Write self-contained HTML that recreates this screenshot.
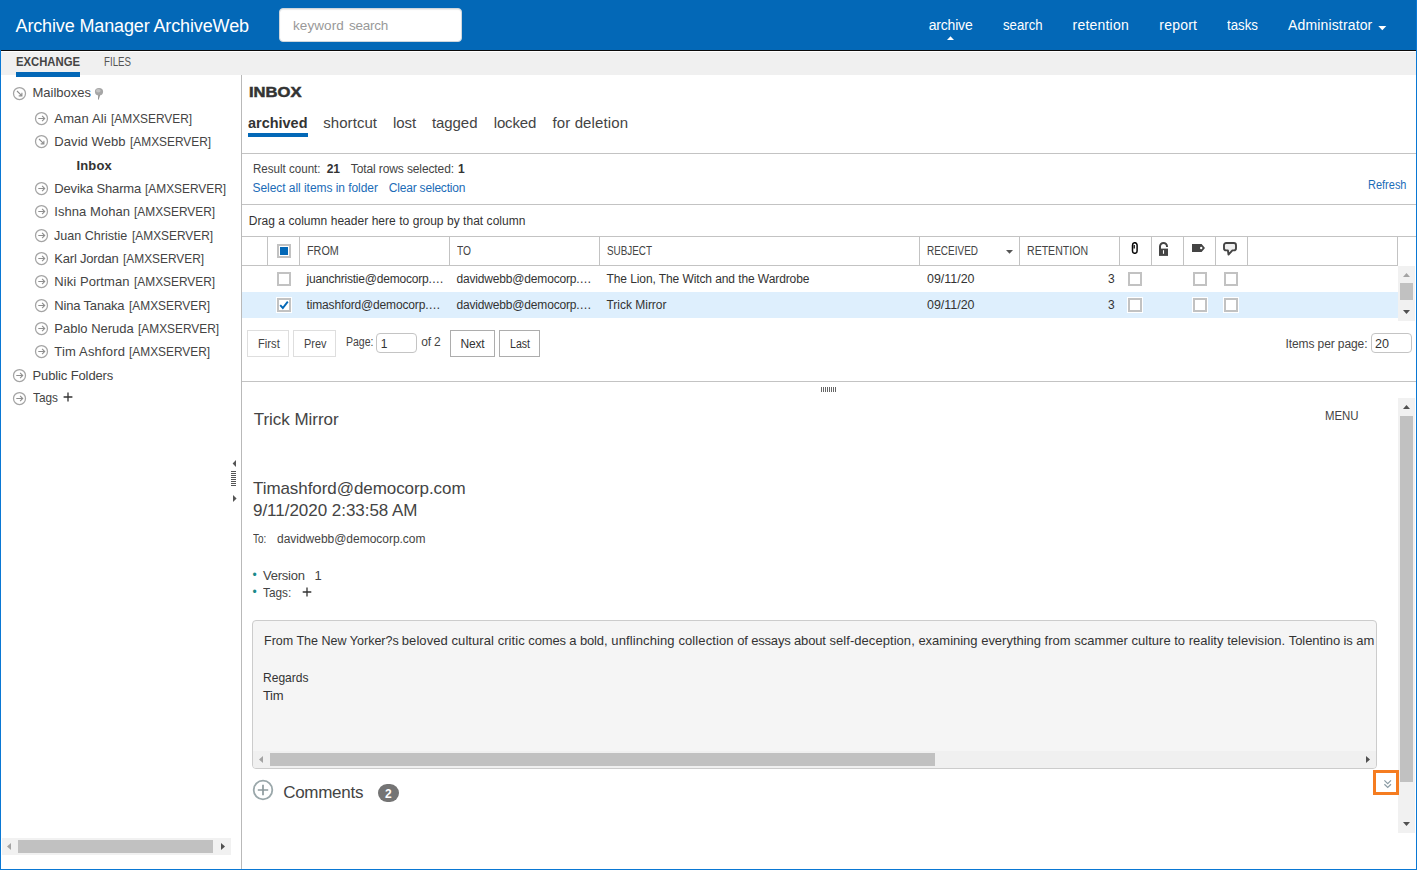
<!DOCTYPE html>
<html lang="en"><head><meta charset="utf-8"><title>Archive Manager ArchiveWeb</title>
<style>
html,body{margin:0;padding:0}
body{width:1417px;height:870px;position:relative;overflow:hidden;background:#fff;font-family:'Liberation Sans',sans-serif;color:#444}
.t{position:absolute;white-space:nowrap;line-height:24px;transform-origin:0 50%}
.abs,.ti,.cb,.ln,.vl{position:absolute}
.ln{height:1px;background:#c3c3c3}
.vl{width:1px;background:#c3c3c3}
#hdr{position:absolute;left:0;top:0;width:1417px;height:50px;background:#0368b7}
#hdrline{position:absolute;left:0;top:50px;width:1417px;height:1px;background:#0b0b0b}
#tabs{position:absolute;left:0;top:52px;width:1417px;height:23px;background:#f0f0f0}
#search{position:absolute;box-sizing:border-box;left:279px;top:8px;width:183px;height:34px;background:#fff;border:1px solid #cfd6dc;border-radius:4px;box-shadow:inset 0 1px 1px rgba(0,0,0,.08)}
.cb{width:10px;height:10px;border:2px solid #c2c2c2;background:#fff}
.cb.on{box-shadow:0 0 0 1px #fff}
.cb i{position:absolute;left:1px;top:1px;width:8px;height:8px;background:#0368b7}
.cb svg{position:absolute;left:0;top:0}
.btn{position:absolute;box-sizing:border-box;border:1px solid #adadad;background:#fff}
.btn.dis{border-color:#dedede}
.inp{position:absolute;box-sizing:border-box;border:1px solid #c4c4c4;border-radius:4px;background:#fff}
.sb{position:absolute;background:#f1f1f1}
.th{position:absolute;background:#c1c1c1}
#frame-l,#frame-r,#frame-b{position:absolute;background:#0a78d4}
</style></head><body>

<div id="hdr">
<span class="t" style="left:15.5px;top:14px;font-size:18px;color:#fff;letter-spacing:-0.13px;">Archive Manager ArchiveWeb</span>
<div id="search"></div>
<span class="t" style="left:293px;top:14px;font-size:13.5px;color:#999;letter-spacing:0.09px;">keyword</span>
<span class="t" style="left:349px;top:14px;font-size:13.5px;color:#999;letter-spacing:-0.25px;">search</span>
<span class="t" style="left:928.8px;top:13px;font-size:14px;color:#fff;letter-spacing:-0.21px;">archive</span>
<span class="t" style="left:1002.7px;top:13px;font-size:14px;color:#fff;transform:scaleX(0.942);">search</span>
<span class="t" style="left:1072.6px;top:13px;font-size:14px;color:#fff;letter-spacing:0.20px;">retention</span>
<span class="t" style="left:1159.3px;top:13px;font-size:14px;color:#fff;letter-spacing:0.22px;">report</span>
<span class="t" style="left:1227px;top:13px;font-size:14px;color:#fff;transform:scaleX(0.948);">tasks</span>
<span class="t" style="left:1288px;top:13px;font-size:14px;color:#fff;letter-spacing:0.15px;">Administrator</span>
<svg class="abs" style="left:947px;top:36px" width="7" height="4" viewBox="0 0 7 4"><path d="M0,4 L3.5,0.3 L7,4z" fill="#fff"/></svg>
<svg class="abs" style="left:1378px;top:25.5px" width="9" height="5" viewBox="0 0 9 5"><path d="M0.3,0 L8.3,0 L4.3,4.2z" fill="#fff"/></svg>
</div><div id="hdrline"></div>
<div id="tabs"></div>
<span class="t" style="left:16px;top:50px;font-size:12px;color:#444;font-weight:700;transform:scaleX(0.941);">EXCHANGE</span>
<span class="t" style="left:103.5px;top:50px;font-size:12px;color:#555;transform:scaleX(0.809);">FILES</span>
<div class="abs" style="left:16px;top:72px;width:64px;height:5px;background:#0368b7"></div>
<div id="tree">
<svg class="ti" style="left:12.0px;top:86.0px" width="15" height="15" viewBox="-7.5 -7.5 15 15"><circle r="6" fill="none" stroke="#a4a4a4" stroke-width="1.25"/><g fill="none" stroke="#8e8e8e" stroke-width="1.1"><path d="M-2.5,-2.5 L2.2,2.2 M2.4,-0.8 L2.4,2.4 L-0.8,2.4" /></g></svg>
<span class="t" style="left:32.5px;top:81px;font-size:13px;color:#444;">Mailboxes</span>
<svg class="abs" style="left:94px;top:87px" width="10" height="14" viewBox="0 0 10 14"><path d="M4.3,7.6 L6.2,7.6 L4.7,12.8 L4.1,12.6z" fill="#858585"/><ellipse cx="5" cy="4.7" rx="4.1" ry="3.7" fill="#a6a6a6"/><ellipse cx="4.3" cy="3.8" rx="2.3" ry="1.7" fill="#c4c4c4"/></svg>
<svg class="ti" style="left:34.0px;top:111.0px" width="15" height="15" viewBox="-7.5 -7.5 15 15"><circle r="6" fill="none" stroke="#a4a4a4" stroke-width="1.25"/><g fill="none" stroke="#8e8e8e" stroke-width="1.1"><path d="M-3.2,0 L3,0 M0.6,-2.6 L3.2,0 L0.6,2.6" /></g></svg>
<span class="t" style="left:54.3px;top:107px;font-size:13px;color:#444;letter-spacing:0.16px;">Aman Ali</span>
<span class="t" style="left:110.95px;top:107px;font-size:13px;color:#444;transform:scaleX(0.915);">[AMXSERVER]</span>
<svg class="ti" style="left:34.0px;top:134.0px" width="15" height="15" viewBox="-7.5 -7.5 15 15"><circle r="6" fill="none" stroke="#a4a4a4" stroke-width="1.25"/><g fill="none" stroke="#8e8e8e" stroke-width="1.1"><path d="M-2.5,-2.5 L2.2,2.2 M2.4,-0.8 L2.4,2.4 L-0.8,2.4" /></g></svg>
<span class="t" style="left:54.3px;top:130px;font-size:13px;color:#444;letter-spacing:0.07px;">David Webb</span>
<span class="t" style="left:129.7px;top:130px;font-size:13px;color:#444;transform:scaleX(0.915);">[AMXSERVER]</span>
<span class="t" style="left:76.5px;top:154px;font-size:13px;color:#333;font-weight:700;letter-spacing:0.14px;">Inbox</span>
<svg class="ti" style="left:34.0px;top:181.0px" width="15" height="15" viewBox="-7.5 -7.5 15 15"><circle r="6" fill="none" stroke="#a4a4a4" stroke-width="1.25"/><g fill="none" stroke="#8e8e8e" stroke-width="1.1"><path d="M-3.2,0 L3,0 M0.6,-2.6 L3.2,0 L0.6,2.6" /></g></svg>
<span class="t" style="left:54.3px;top:177px;font-size:13px;color:#444;letter-spacing:-0.16px;">Devika Sharma</span>
<span class="t" style="left:145.45px;top:177px;font-size:13px;color:#444;transform:scaleX(0.915);">[AMXSERVER]</span>
<svg class="ti" style="left:34.0px;top:204.0px" width="15" height="15" viewBox="-7.5 -7.5 15 15"><circle r="6" fill="none" stroke="#a4a4a4" stroke-width="1.25"/><g fill="none" stroke="#8e8e8e" stroke-width="1.1"><path d="M-3.2,0 L3,0 M0.6,-2.6 L3.2,0 L0.6,2.6" /></g></svg>
<span class="t" style="left:54.3px;top:200px;font-size:13px;color:#444;letter-spacing:0.05px;">Ishna Mohan</span>
<span class="t" style="left:134.2px;top:200px;font-size:13px;color:#444;transform:scaleX(0.915);">[AMXSERVER]</span>
<svg class="ti" style="left:34.0px;top:228.0px" width="15" height="15" viewBox="-7.5 -7.5 15 15"><circle r="6" fill="none" stroke="#a4a4a4" stroke-width="1.25"/><g fill="none" stroke="#8e8e8e" stroke-width="1.1"><path d="M-3.2,0 L3,0 M0.6,-2.6 L3.2,0 L0.6,2.6" /></g></svg>
<span class="t" style="left:54.3px;top:224px;font-size:13px;color:#444;transform:scaleX(0.965);">Juan Christie</span>
<span class="t" style="left:131.7px;top:224px;font-size:13px;color:#444;transform:scaleX(0.915);">[AMXSERVER]</span>
<svg class="ti" style="left:34.0px;top:251.0px" width="15" height="15" viewBox="-7.5 -7.5 15 15"><circle r="6" fill="none" stroke="#a4a4a4" stroke-width="1.25"/><g fill="none" stroke="#8e8e8e" stroke-width="1.1"><path d="M-3.2,0 L3,0 M0.6,-2.6 L3.2,0 L0.6,2.6" /></g></svg>
<span class="t" style="left:54.3px;top:247px;font-size:13px;color:#444;letter-spacing:-0.20px;">Karl Jordan</span>
<span class="t" style="left:122.95px;top:247px;font-size:13px;color:#444;transform:scaleX(0.915);">[AMXSERVER]</span>
<svg class="ti" style="left:34.0px;top:274.25px" width="15" height="15" viewBox="-7.5 -7.5 15 15"><circle r="6" fill="none" stroke="#a4a4a4" stroke-width="1.25"/><g fill="none" stroke="#8e8e8e" stroke-width="1.1"><path d="M-3.2,0 L3,0 M0.6,-2.6 L3.2,0 L0.6,2.6" /></g></svg>
<span class="t" style="left:54.3px;top:270px;font-size:13px;color:#444;letter-spacing:0.07px;">Niki Portman</span>
<span class="t" style="left:133.7px;top:270px;font-size:13px;color:#444;transform:scaleX(0.915);">[AMXSERVER]</span>
<svg class="ti" style="left:34.0px;top:298.0px" width="15" height="15" viewBox="-7.5 -7.5 15 15"><circle r="6" fill="none" stroke="#a4a4a4" stroke-width="1.25"/><g fill="none" stroke="#8e8e8e" stroke-width="1.1"><path d="M-3.2,0 L3,0 M0.6,-2.6 L3.2,0 L0.6,2.6" /></g></svg>
<span class="t" style="left:54.3px;top:294px;font-size:13px;color:#444;letter-spacing:-0.18px;">Nina Tanaka</span>
<span class="t" style="left:128.7px;top:294px;font-size:13px;color:#444;transform:scaleX(0.915);">[AMXSERVER]</span>
<svg class="ti" style="left:34.0px;top:321.0px" width="15" height="15" viewBox="-7.5 -7.5 15 15"><circle r="6" fill="none" stroke="#a4a4a4" stroke-width="1.25"/><g fill="none" stroke="#8e8e8e" stroke-width="1.1"><path d="M-3.2,0 L3,0 M0.6,-2.6 L3.2,0 L0.6,2.6" /></g></svg>
<span class="t" style="left:54.3px;top:317px;font-size:13px;color:#444;letter-spacing:-0.00px;">Pablo Neruda</span>
<span class="t" style="left:137.95px;top:317px;font-size:13px;color:#444;transform:scaleX(0.915);">[AMXSERVER]</span>
<svg class="ti" style="left:34.0px;top:344.25px" width="15" height="15" viewBox="-7.5 -7.5 15 15"><circle r="6" fill="none" stroke="#a4a4a4" stroke-width="1.25"/><g fill="none" stroke="#8e8e8e" stroke-width="1.1"><path d="M-3.2,0 L3,0 M0.6,-2.6 L3.2,0 L0.6,2.6" /></g></svg>
<span class="t" style="left:54.3px;top:340px;font-size:13px;color:#444;letter-spacing:0.18px;">Tim Ashford</span>
<span class="t" style="left:129.2px;top:340px;font-size:13px;color:#444;transform:scaleX(0.915);">[AMXSERVER]</span>
<svg class="ti" style="left:12.0px;top:368.0px" width="15" height="15" viewBox="-7.5 -7.5 15 15"><circle r="6" fill="none" stroke="#a4a4a4" stroke-width="1.25"/><g fill="none" stroke="#8e8e8e" stroke-width="1.1"><path d="M-3.2,0 L3,0 M0.6,-2.6 L3.2,0 L0.6,2.6" /></g></svg>
<span class="t" style="left:32.5px;top:364px;font-size:13px;color:#444;letter-spacing:-0.12px;">Public Folders</span>
<svg class="ti" style="left:12.0px;top:391.0px" width="15" height="15" viewBox="-7.5 -7.5 15 15"><circle r="6" fill="none" stroke="#a4a4a4" stroke-width="1.25"/><g fill="none" stroke="#8e8e8e" stroke-width="1.1"><path d="M-3.2,0 L3,0 M0.6,-2.6 L3.2,0 L0.6,2.6" /></g></svg>
<span class="t" style="left:32.5px;top:386px;font-size:13px;color:#444;transform:scaleX(0.910);">Tags</span>
<svg class="abs" style="left:63px;top:392px" width="10" height="10" viewBox="0 0 10 10"><path d="M5,0.5 V9.5 M0.6,5 H9.4" stroke="#333" stroke-width="1.3"/></svg>
<div class="sb" style="left:2px;top:838px;width:229px;height:17px"></div><div class="th" style="left:18px;top:840px;width:195px;height:13px"></div>
<svg class="abs" style="left:7px;top:843px" width="4" height="7" viewBox="0 0 4 7"><path d="M4,0 L0,3.5 L4,7z" fill="#a3a3a3"/></svg>
<svg class="abs" style="left:221px;top:843px" width="4" height="7" viewBox="0 0 4 7"><path d="M0,0 L4,3.5 L0,7z" fill="#505050"/></svg>
</div>
<div class="vl" style="left:241px;top:75px;height:794px;background:#b9b9b9"></div>
<svg class="abs" style="left:231px;top:460px" width="7" height="42" viewBox="0 0 7 42"><path d="M5,0 L1.6,3.5 L5,7z M2,35 L5.6,38.5 L2,42z" fill="#555"/><path d="M0,11.5h5M0,13.5h5M0,15.5h5M0,17.5h5M0,19.5h5M0,21.5h5M0,23.5h5M0,25.5h5" stroke="#555" stroke-width="1"/></svg>
<div id="main">
<span class="t" style="left:248.5px;top:80px;font-size:15px;color:#333;font-weight:700;transform:scaleX(1.105);-webkit-text-stroke:0.5px #333;">INBOX</span>
<span class="t" style="left:248px;top:111px;font-size:15px;color:#333;font-weight:700;transform:scaleX(0.964);">archived</span>
<span class="t" style="left:323.25px;top:111px;font-size:15px;color:#444;letter-spacing:0.06px;">shortcut</span>
<span class="t" style="left:393px;top:111px;font-size:15px;color:#444;letter-spacing:-0.03px;">lost</span>
<span class="t" style="left:432px;top:111px;font-size:15px;color:#444;letter-spacing:-0.08px;">tagged</span>
<span class="t" style="left:493.75px;top:111px;font-size:15px;color:#444;letter-spacing:-0.17px;">locked</span>
<span class="t" style="left:552.5px;top:111px;font-size:15px;color:#444;letter-spacing:0.12px;">for deletion</span>
<div class="abs" style="left:248px;top:133px;width:60px;height:4px;background:#0368b7"></div>
<div class="ln" style="left:242px;top:153px;width:1174px"></div>
<span class="t" style="left:252.5px;top:157px;font-size:12px;color:#444;transform:scaleX(0.964);">Result count:</span>
<span class="t" style="left:326.75px;top:157px;font-size:12px;color:#333;font-weight:700;letter-spacing:-0.11px;">21</span>
<span class="t" style="left:350.75px;top:157px;font-size:12px;color:#444;letter-spacing:-0.11px;">Total rows selected:</span>
<span class="t" style="left:458px;top:157px;font-size:12px;color:#333;font-weight:700;">1</span>
<span class="t" style="left:252.5px;top:176px;font-size:12px;color:#1b6cb7;letter-spacing:-0.05px;">Select all items in folder</span>
<span class="t" style="left:388.75px;top:176px;font-size:12px;color:#1b6cb7;letter-spacing:-0.19px;">Clear selection</span>
<span class="t" style="left:1367.5px;top:173px;font-size:12px;color:#1b6cb7;transform:scaleX(0.916);">Refresh</span>
<div class="ln" style="left:242px;top:204px;width:1174px"></div>
<span class="t" style="left:248.75px;top:209px;font-size:12px;color:#333;letter-spacing:0.04px;">Drag a column header here to group by that column</span>
<div class="ln" style="left:242px;top:236px;width:1174px"></div>
<div class="ln" style="left:242px;top:265px;width:1156px"></div>
<div class="vl" style="left:267px;top:237px;height:28px"></div>
<div class="vl" style="left:299px;top:237px;height:28px"></div>
<div class="vl" style="left:449px;top:237px;height:28px"></div>
<div class="vl" style="left:599px;top:237px;height:28px"></div>
<div class="vl" style="left:919px;top:237px;height:28px"></div>
<div class="vl" style="left:1019px;top:237px;height:28px"></div>
<div class="vl" style="left:1119px;top:237px;height:28px"></div>
<div class="vl" style="left:1151px;top:237px;height:28px"></div>
<div class="vl" style="left:1183px;top:237px;height:28px"></div>
<div class="vl" style="left:1215px;top:237px;height:28px"></div>
<div class="vl" style="left:1247px;top:237px;height:28px"></div>
<div class="vl" style="left:1397px;top:237px;height:28px"></div>
<span class="cb" style="left:277px;top:244px"><i></i></span>
<span class="t" style="left:306.5px;top:239px;font-size:12px;color:#444;transform:scaleX(0.899);">FROM</span>
<span class="t" style="left:456.5px;top:239px;font-size:12px;color:#444;transform:scaleX(0.851);">TO</span>
<span class="t" style="left:606.5px;top:239px;font-size:12px;color:#444;transform:scaleX(0.823);">SUBJECT</span>
<span class="t" style="left:926.5px;top:239px;font-size:12px;color:#444;transform:scaleX(0.831);">RECEIVED</span>
<span class="t" style="left:1026.5px;top:239px;font-size:12px;color:#444;transform:scaleX(0.880);">RETENTION</span>
<svg class="abs" style="left:1006px;top:250px" width="7" height="4" viewBox="0 0 7 4"><path d="M0,0 L7,0 L3.5,3.8z" fill="#555"/></svg>
<svg class="abs" style="left:1131px;top:242px" width="8" height="12" viewBox="0 0 8 12"><path d="M1.5,3.2 A2.3,2.5 0 0 1 6.1,3.2 V8.9 A2.3,2.4 0 0 1 1.5,8.9z" fill="#fff" stroke="#0a0a0a" stroke-width="1.5"/><path d="M3.2,3 V6.6" fill="none" stroke="#222" stroke-width="1.5"/></svg>
<svg class="abs" style="left:1159px;top:242px" width="9" height="14" viewBox="0 0 9 14"><path d="M1,7 V4.6 A3.5,3.6 0 0 1 8,4.6 V5" fill="none" stroke="#444" stroke-width="2"/><rect x="0" y="6.6" width="9" height="7.3" fill="#444"/><rect x="3.95" y="8.2" width="1.1" height="3.6" fill="#fff"/></svg>
<svg class="abs" style="left:1192px;top:244px" width="13" height="8" viewBox="0 0 13 8"><path d="M0,0 H9.6 L13,4 L9.6,8 H0z" fill="#444"/><circle cx="9.2" cy="4" r="1.2" fill="#fff"/></svg>
<svg class="abs" style="left:1223px;top:242px" width="14" height="14" viewBox="0 0 14 14"><path d="M3.2,1 H10.8 A2.2,2.2 0 0 1 13,3.2 V6.2 A2.2,2.2 0 0 1 10.8,8.4 H9.4 L5.5,12.6 L4.9,8.4 H3.2 A2.2,2.2 0 0 1 1,6.2 V3.2 A2.2,2.2 0 0 1 3.2,1z" fill="#efefef" stroke="#444" stroke-width="1.9" stroke-linejoin="round"/></svg>
<div class="abs" style="left:242px;top:292px;width:1156px;height:26px;background:#deeffd"></div>
<span class="cb" style="left:277px;top:272px"></span>
<span class="t" style="left:306.5px;top:267px;font-size:12px;color:#333;letter-spacing:-0.20px;">juanchristie@democorp.…</span>
<span class="t" style="left:456.5px;top:267px;font-size:12px;color:#333;letter-spacing:-0.17px;">davidwebb@democorp.…</span>
<span class="t" style="left:606.5px;top:267px;font-size:12px;color:#333;letter-spacing:-0.09px;">The Lion, The Witch and the Wardrobe</span>
<span class="t" style="left:926.5px;top:267px;font-size:12px;color:#333;transform:scaleX(1.036);">09/11/20</span>
<span class="t" style="left:1108px;top:267px;font-size:12px;color:#333;">3</span>
<span class="cb" style="left:1128px;top:272px"></span>
<span class="cb" style="left:1193px;top:272px"></span>
<span class="cb" style="left:1224px;top:272px"></span>
<span class="cb on" style="left:277px;top:298px"><svg width="10" height="10" viewBox="0 0 10 10"><path d="M1.2,5.2 L3.8,8 L8.8,1.6" fill="none" stroke="#0368b7" stroke-width="1.9"/></svg></span>
<span class="t" style="left:306.5px;top:293px;font-size:12px;color:#333;letter-spacing:-0.15px;">timashford@democorp.…</span>
<span class="t" style="left:456.5px;top:293px;font-size:12px;color:#333;letter-spacing:-0.17px;">davidwebb@democorp.…</span>
<span class="t" style="left:606.5px;top:293px;font-size:12px;color:#333;letter-spacing:-0.02px;">Trick Mirror</span>
<span class="t" style="left:926.5px;top:293px;font-size:12px;color:#333;transform:scaleX(1.036);">09/11/20</span>
<span class="t" style="left:1108px;top:293px;font-size:12px;color:#333;">3</span>
<span class="cb on" style="left:1128px;top:298px"></span>
<span class="cb on" style="left:1193px;top:298px"></span>
<span class="cb on" style="left:1224px;top:298px"></span>
<div class="sb" style="left:1398px;top:266px;width:17px;height:55px"></div><div class="th" style="left:1400px;top:283px;width:13px;height:17px"></div>
<svg class="abs" style="left:1403px;top:273px" width="7" height="4" viewBox="0 0 7 4"><path d="M0,4 L3.5,0 L7,4z" fill="#a3a3a3"/></svg>
<svg class="abs" style="left:1403px;top:310px" width="7" height="4" viewBox="0 0 7 4"><path d="M0,0 L3.5,4 L7,0z" fill="#505050"/></svg>
<div class="btn dis" style="left:247px;top:330px;width:42px;height:27px"></div><span class="t" style="left:257.5px;top:332px;font-size:12px;color:#444;transform:scaleX(0.932);">First</span>
<div class="btn dis" style="left:293px;top:330px;width:43px;height:27px"></div><span class="t" style="left:303.75px;top:332px;font-size:12px;color:#444;transform:scaleX(0.911);">Prev</span>
<span class="t" style="left:345.5px;top:330px;font-size:12px;color:#444;transform:scaleX(0.877);">Page:</span>
<div class="inp" style="left:376px;top:333px;width:41px;height:20px"></div><span class="t" style="left:380.75px;top:332px;font-size:12px;color:#333;">1</span>
<span class="t" style="left:421.25px;top:330px;font-size:12px;color:#444;letter-spacing:-0.17px;">of 2</span>
<div class="btn" style="left:450px;top:330px;width:45px;height:27px"></div><span class="t" style="left:460.5px;top:332px;font-size:12px;color:#333;letter-spacing:-0.23px;">Next</span>
<div class="btn" style="left:499px;top:330px;width:41px;height:27px"></div><span class="t" style="left:509.5px;top:332px;font-size:12px;color:#333;transform:scaleX(0.882);">Last</span>
<span class="t" style="left:1285.5px;top:332px;font-size:12px;color:#444;letter-spacing:-0.10px;">Items per page:</span>
<div class="inp" style="left:1371px;top:333px;width:41px;height:20px"></div><span class="t" style="left:1375px;top:332px;font-size:12px;color:#333;transform:scaleX(1.048);">20</span>
<div class="ln" style="left:242px;top:381px;width:1174px"></div>
<svg class="abs" style="left:821px;top:387px" width="16" height="6" viewBox="0 0 16 6"><path d="M0.5,0v5M2.5,0v5M4.5,0v5M6.5,0v5M8.5,0v5M10.5,0v5M12.5,0v5M14.5,0v5" stroke="#666" stroke-width="1"/></svg>
<span class="t" style="left:253.75px;top:408px;font-size:17px;color:#444;letter-spacing:-0.03px;">Trick Mirror</span>
<span class="t" style="left:1324.8px;top:404px;font-size:12.5px;color:#444;transform:scaleX(0.913);">MENU</span>
<span class="t" style="left:253px;top:477px;font-size:17px;color:#444;letter-spacing:-0.07px;">Timashford@democorp.com</span>
<span class="t" style="left:253px;top:499px;font-size:17px;color:#444;letter-spacing:-0.03px;">9/11/2020 2:33:58 AM</span>
<span class="t" style="left:253px;top:527px;font-size:12px;color:#444;transform:scaleX(0.827);">To:</span>
<span class="t" style="left:277px;top:527px;font-size:12px;color:#444;letter-spacing:-0.02px;">davidwebb@democorp.com</span>
<span class="t" style="left:252.6px;top:563px;font-size:12px;color:#1b8a8a;">•</span>
<span class="t" style="left:263px;top:564px;font-size:13px;color:#444;letter-spacing:-0.23px;">Version</span>
<span class="t" style="left:314.5px;top:564px;font-size:13px;color:#444;">1</span>
<span class="t" style="left:252.6px;top:580px;font-size:12px;color:#1b8a8a;">•</span>
<span class="t" style="left:263px;top:581px;font-size:13px;color:#444;transform:scaleX(0.909);">Tags:</span>
<svg class="abs" style="left:301.5px;top:586.5px" width="10" height="10" viewBox="0 0 10 10"><path d="M5,0.5 V9.5 M0.7,5 H9.3" stroke="#333" stroke-width="1.3"/></svg>
<div class="abs" style="left:252px;top:620px;width:1123px;height:147px;border:1px solid #ccc;border-radius:4px;background:#f5f5f5;overflow:hidden">
<div class="sb" style="left:0;top:130px;width:1123px;height:17px;background:#f0f0f0"></div><div class="th" style="left:17px;top:132px;width:665px;height:13px"></div>
<svg class="abs" style="left:6px;top:135px" width="4" height="7" viewBox="0 0 4 7"><path d="M4,0 L0,3.5 L4,7z" fill="#a3a3a3"/></svg>
<svg class="abs" style="left:1113px;top:135px" width="4" height="7" viewBox="0 0 4 7"><path d="M0,0 L4,3.5 L0,7z" fill="#505050"/></svg>
</div>
<span class="t" style="left:263.5px;top:629px;font-size:13px;color:#333;transform:scaleX(0.963);">From The New Yorker?s</span>
<span class="t" style="left:401.8px;top:629px;font-size:13px;color:#333;letter-spacing:0.07px;">beloved cultural critic</span>
<span class="t" style="left:528.3px;top:629px;font-size:13px;color:#333;letter-spacing:-0.14px;">comes a bold,</span>
<span class="t" style="left:611.3px;top:629px;font-size:13px;color:#333;letter-spacing:0.11px;">unflinching collection</span>
<span class="t" style="left:737.2px;top:629px;font-size:13px;color:#333;letter-spacing:-0.17px;">of essays about</span>
<span class="t" style="left:829.5px;top:629px;font-size:13px;color:#333;letter-spacing:0.05px;">self-deception,</span>
<span class="t" style="left:918.4px;top:629px;font-size:13px;color:#333;letter-spacing:-0.01px;">examining everything</span>
<span class="t" style="left:1044.6px;top:629px;font-size:13px;color:#333;letter-spacing:0.02px;">from scammer culture</span>
<span class="t" style="left:1174.2px;top:629px;font-size:13px;color:#333;letter-spacing:0.02px;">to reality television.</span>
<span class="t" style="left:1288.8px;top:629px;font-size:13px;color:#333;letter-spacing:-0.09px;">Tolentino is am</span>
<span class="t" style="left:263px;top:666px;font-size:13px;color:#333;transform:scaleX(0.926);">Regards</span>
<span class="t" style="left:263px;top:684px;font-size:13px;color:#333;letter-spacing:-0.34px;">Tim</span>
<svg class="abs" style="left:252px;top:779px" width="22" height="22" viewBox="0 0 22 22"><circle cx="11" cy="11" r="9.3" fill="none" stroke="#9aa7aa" stroke-width="1.8"/><path d="M11,5.8 V16.2 M5.8,11 H16.2" stroke="#8d9a9d" stroke-width="1.7"/></svg>
<span class="t" style="left:283.2px;top:781px;font-size:17px;color:#444;letter-spacing:-0.28px;">Comments</span>
<div class="abs" style="left:378px;top:784px;width:21px;height:18px;border-radius:9px;background:#747474"></div><span class="t" style="left:385px;top:782px;font-size:12px;color:#fff;font-weight:700;">2</span>
<div class="abs" style="left:1373px;top:770px;width:20px;height:19px;border:3px solid #f57c20;background:#fff;z-index:3"></div>
<svg class="abs" style="left:1383px;top:779px;z-index:4" width="10" height="10" viewBox="0 0 10 10"><path d="M1.4,1.4 L4.7,4.6 L8,1.4 M1.4,5.2 L4.7,8.4 L8,5.2" fill="none" stroke="#8a9ba4" stroke-width="1.2"/></svg>
<div class="sb" style="left:1398px;top:398px;width:17px;height:435px"></div><div class="th" style="left:1400px;top:416px;width:13px;height:366px"></div>
<svg class="abs" style="left:1403px;top:405px" width="7" height="4" viewBox="0 0 7 4"><path d="M0,4 L3.5,0 L7,4z" fill="#505050"/></svg>
<svg class="abs" style="left:1403px;top:822px" width="7" height="4" viewBox="0 0 7 4"><path d="M0,0 L3.5,4 L7,0z" fill="#505050"/></svg>
</div>
<div id="frame-l" style="left:0;top:50px;width:1px;height:820px"></div><div id="frame-r" style="left:1416px;top:0;width:1px;height:870px"></div><div id="frame-b" style="left:0;top:869px;width:1417px;height:1px"></div>
</body></html>
